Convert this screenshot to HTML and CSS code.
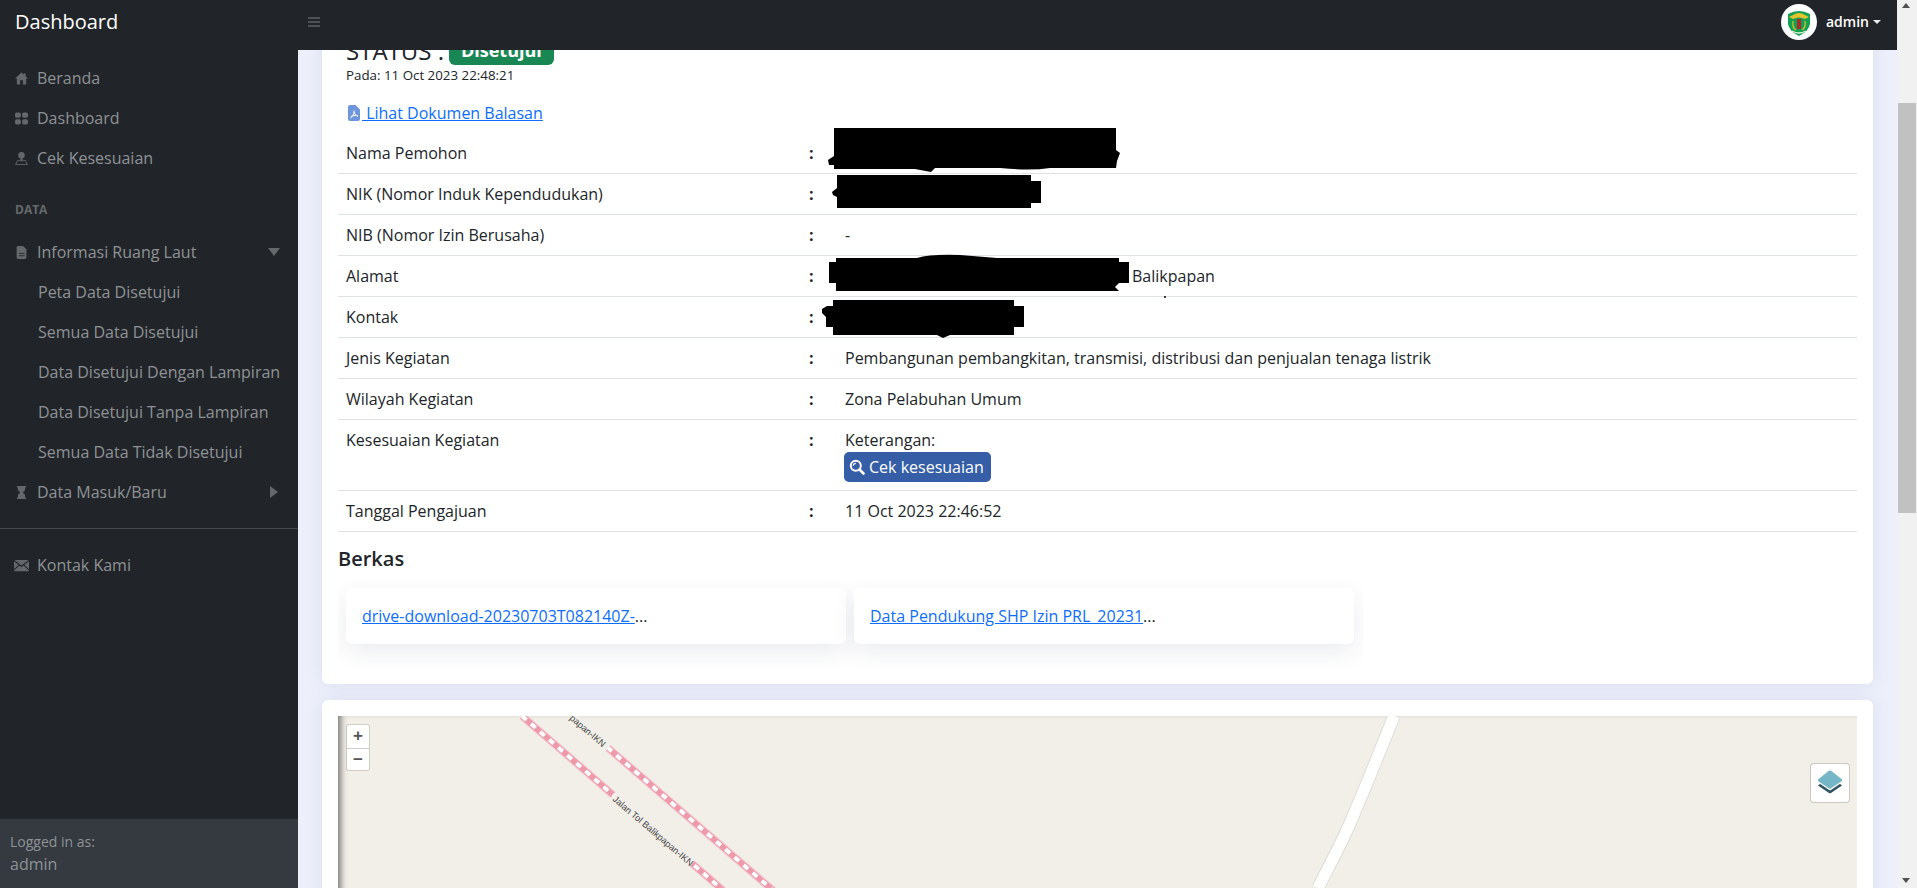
FILE: index.html
```html
<!DOCTYPE html>
<html lang="en">
<head>
<meta charset="UTF-8">
<meta name="viewport" content="width=device-width, initial-scale=1.0">
<title>Dashboard</title>
<link rel="stylesheet" href="styles.css">
</head>
<body>

<div class="app">
    <nav class="topnav">
        <a class="brand">Dashboard</a>
        <svg class="toggle" viewBox="0 0 12 10" width="12" height="10"><path d="M0 1h12M0 5h12M0 9h12" stroke="#7d8083" stroke-width="1.2"/></svg>
        <div class="user">
            <span class="avatar">
                <svg viewBox="0 0 36 36" width="36" height="36">
                    <circle cx="18" cy="18" r="18" fill="#fff"/>
                    <path d="M7 10 Q18 4 29 10 V20 Q28 27 18 32 Q8 27 7 20Z" fill="#12a150"/>
                    <path d="M8 13 L12 11 Q18 7 24 11 L28 13 L24 15 Q18 12 12 15Z" fill="#e3c22e"/>
                    <rect x="16" y="15" width="4" height="10" fill="#b3262b"/>
                    <path d="M12 17 Q11 24 15 26M24 17 Q25 24 21 26" stroke="#e3c22e" stroke-width="1.200" fill="none"/>
                    <path d="M11 27 Q18 31 25 27" stroke="#e8f3d8" stroke-width="1.400" fill="none"/>
                </svg>
            </span>
            <span class="user-name">admin</span>
            <span class="caret"></span>
        </div>
    </nav>

    <div class="below">
        <aside class="sidebar">
            <div class="menu">
                <a class="item">
                    <svg class="ico" viewBox="1 1.500 14 13"><path d="M8 1.500 1 8h2v6.500h3.500V10h3v4.500H13V8h2L12.500 5.600V2.500h-2v1.200z"/></svg>
                    Beranda
                </a>
                <a class="item">
                    <svg class="ico" viewBox="1.500 2 13.300 12.300"><rect x="1.500" y="2" width="6" height="5.500" rx="1.800"/><rect x="8.800" y="2" width="6" height="5.500" rx="1.800"/><rect x="1.500" y="8.800" width="6" height="5.500" rx="1.800"/><rect x="8.800" y="8.800" width="6" height="5.500" rx="1.800"/></svg>
                    Dashboard
                </a>
                <a class="item">
                    <svg class="ico" viewBox="1 1 14 14.500"><circle cx="8" cy="4.600" r="3.600"/><path d="M6.700 8h2.600v3.400H6.700z"/><path d="M3.600 10.400h2.600M9.800 10.400h2.600M3.600 10.400 1.400 15h13.200l-2.200-4.600" fill="none" stroke="currentColor" stroke-width="1"/></svg>
                    Cek Kesesuaian
                </a>
                <div class="menu-head">DATA</div>
                <a class="item">
                    <svg class="ico" viewBox="1.500 1 12.500 14"><path d="M4 1h5.500L13 4.500V13.500a1.500 1.500 0 0 1-1.500 1.500h-7.500A1.500 1.500 0 0 1 2.500 13.500V2.500A1.500 1.500 0 0 1 4 1z"/><path d="M5 9h6M5 11.500h6" stroke="#212529" stroke-width=".9"/></svg>
                    Informasi Ruang Laut
                    <span class="arrow-down"></span>
                </a>
                <a class="item sub">Peta Data Disetujui</a>
                <a class="item sub">Semua Data Disetujui</a>
                <a class="item sub">Data Disetujui Dengan Lampiran</a>
                <a class="item sub">Data Disetujui Tanpa Lampiran</a>
                <a class="item sub">Semua Data Tidak Disetujui</a>
                <a class="item">
                    <svg class="ico" viewBox="2 1 12 14"><path d="M3 1h10v1.400h-1V4c0 2-1.600 3-2.600 4 1 1 2.600 2 2.600 4v1.600h1V15H3v-1.400h1V12c0-2 1.600-3 2.600-4C5.600 7 4 6 4 4V2.400H3z"/></svg>
                    Data Masuk/Baru
                    <span class="arrow-right"></span>
                </a>
                <hr class="menu-line">
                <a class="item">
                    <svg class="ico ico-wide" viewBox="0 0 16 12"><path d="M1 0h14a1 1 0 0 1 .6.200L8 6 .4.200A1 1 0 0 1 1 0z"/><path d="M0 1.400 5 5.200 0 10zM16 1.400 11 5.200l5 4.800zM5.800 5.900 8 7.500l2.200-1.600L16 11.400a1 1 0 0 1-1 .6H1a1 1 0 0 1-1-.6z"/></svg>
                    Kontak Kami
                </a>
            </div>
            <div class="side-foot">
                <div class="foot-small">Logged in as:</div>
                <div>admin</div>
            </div>
        </aside>

        <main class="main">
            <div class="scroller">
                <section class="card card-detail">
                    <div class="status-line">
                        <span class="status-title">STATUS :</span>
                        <span class="badge">Disetujui</span>
                    </div>
                    <div class="status-date">Pada: 11 Oct 2023 22:48:21</div>

                    <a class="doc-link">
                        <svg class="pdf" viewBox="0 0 16 16" width="16" height="16"><path d="M4 0h5.500L14 4.500V14a2 2 0 0 1-2 2H4a2 2 0 0 1-2-2V2a2 2 0 0 1 2-2z" fill="#6f96dc"/><path d="M8 5.500c.6 3-1.500 6-3.500 7.500M8 7c1 2.500 2.500 4 4 4.500M4.800 11.500c2-1 4.500-1.300 6.700-1" stroke="#fff" stroke-width="1" fill="none"/></svg>
                        Lihat Dokumen Balasan
                    </a>

                    <table class="info">
                        <colgroup><col class="c-label"><col class="c-colon"><col></colgroup>
                        <tr><td>Nama Pemohon</td><td class="colon">:</td><td></td></tr>
                        <tr><td>NIK (Nomor Induk Kependudukan)</td><td class="colon">:</td><td></td></tr>
                        <tr><td>NIB (Nomor Izin Berusaha)</td><td class="colon">:</td><td>-</td></tr>
                        <tr><td>Alamat</td><td class="colon">:</td><td class="addr">Balikpapan</td></tr>
                        <tr><td>Kontak</td><td class="colon">:</td><td></td></tr>
                        <tr><td>Jenis Kegiatan</td><td class="colon">:</td><td>Pembangunan pembangkitan, transmisi, distribusi dan penjualan tenaga listrik</td></tr>
                        <tr><td>Wilayah Kegiatan</td><td class="colon">:</td><td>Zona Pelabuhan Umum</td></tr>
                        <tr>
                            <td>Kesesuaian Kegiatan</td><td class="colon">:</td>
                            <td>
                                <div class="note">Keterangan:</div>
                                <a class="btn-check">
                                    <svg viewBox="0 0 16 16" width="16" height="16"><circle cx="6.800" cy="6.800" r="5" fill="none" stroke="#fff" stroke-width="2"/><path d="M10.500 10.500 14.500 14.500" stroke="#fff" stroke-width="2.600" stroke-linecap="round"/><path d="M4.300 6.800a2.500 2.500 0 0 1 2.500-2.500" stroke="#fff" stroke-width="1.200" fill="none"/></svg>
                                    Cek kesesuaian
                                </a>
                            </td>
                        </tr>
                        <tr><td>Tanggal Pengajuan</td><td class="colon">:</td><td>11 Oct 2023 22:46:52</td></tr>
                    </table>

                    <h5 class="files-title">Berkas</h5>
                    <div class="files">
                        <div class="file"><a>drive-download-20230703T082140Z-</a>...</div>
                        <div class="file"><a>Data Pendukung SHP Izin PRL_20231</a>...</div>
                    </div>
                </section>

                <section class="card card-map">
                    <div class="map">
                        <svg class="map-lines" viewBox="0 0 1519 190" width="1519" height="190">
                            <g fill="none">
                                <path d="M184 0 395 183" stroke="#f4ccd3" stroke-width="8"/>
                                <path d="M184 0 395 183" stroke="#ee9aaa" stroke-width="6"/>
                                <path d="M184 0 395 183" stroke="#fff" stroke-width="4" stroke-dasharray="6 6"/>
                                <path d="M233 0 445 183" stroke="#f4ccd3" stroke-width="8"/>
                                <path d="M233 0 445 183" stroke="#ee9aaa" stroke-width="6"/>
                                <path d="M233 0 445 183" stroke="#fff" stroke-width="4" stroke-dasharray="6 6"/>
                                <path d="M1056 0C1040 40 1025 78 1009 114 1000 134 990 152 980 172" stroke="#d9d6d0" stroke-width="13"/>
                                <path d="M1056 0C1040 40 1025 78 1009 114 1000 134 990 152 980 172" stroke="#fff" stroke-width="11.500"/>
                            </g>
                            <g class="road-label">
                                <path d="M275 79 354 148" stroke="#f2efe9" stroke-width="9"/>
                                <text transform="translate(274 84) rotate(40.500)">Jalan Tol Balikpapan-IKN</text>
                                <path d="M233 0 270 32" stroke="#f2efe9" stroke-width="9"/>
                                <text transform="translate(231 3) rotate(40.500)">papan-IKN</text>
                            </g>
                        </svg>
                        <div class="zoom-ctl">
                            <a class="zoom-btn">+</a>
                            <a class="zoom-btn">&minus;</a>
                        </div>
                        <div class="layers-ctl">
                            <svg viewBox="0 0 26 26" width="26" height="26">
                                <path d="M13 6 25 15.500 14 23a2 2 0 0 1-2 0L1 15.500z" fill="#2e5560"/>
                                <path d="M13 4 25 12.500 14 20a2 2 0 0 1-2 0L1 12.500z" fill="#f4f5f3"/>
                                <path d="M11.500 1 1 9.500a1.400 1.400 0 0 0 0 1.500l10.500 7a2.400 2.400 0 0 0 2.800 0L25 11a1.400 1.400 0 0 0 0-1.500L14.500 1a2.400 2.400 0 0 0-3 0z" fill="#74b6c5"/>
                            </svg>
                        </div>
                    </div>
                </section>
            </div>
        </main>
    </div>

    <svg class="redact" viewBox="0 0 1917 888" width="1917" height="888">
        <path d="M834 128H1116V150L1120 153 1117 161 1116 168H1050Q1030 171 1000 168H935L931 172 915 169H834V165H829L828 160 834 156z"/>
        <path d="M837 175H1031V181H1041V203H1031V208H837V197L833 195 832 192 837 188z"/>
        <path d="M836 258H917Q930 254 960 255L997 258H1119V262H1129V283H1119L1115 287 1119 291H836V283H829V262H836z"/>
        <path d="M833 300H1014V306H1024V327H1014V335H950L943 338 937 335H833V327H826V317L822 313 822 309 827 306H833z"/>
        <circle cx="1165" cy="297" r="1"/>
    </svg>
</div>

<div class="fake-scrollbar">
    <span class="sb-up"></span>
    <div class="sb-track"><div class="sb-thumb"></div></div>
    <span class="sb-down"></span>
</div>

</body>
</html>
```

FILE: styles.css
```css
* {
    box-sizing: border-box;
}
html, body {
    height: 100%;
}
body {
    margin: 0;
    display: flex;
    overflow: hidden;
    font-family: 'Open Sans', sans-serif;
    font-size: 16px;
    line-height: 24px;
    color: #212529;
}
a {
    text-decoration: none;
}
.app {
    flex: 1;
    min-width: 0;
    height: 888px;
    display: flex;
    flex-direction: column;
    position: relative;
}

/* top bar */
.topnav {
    height: 50px;
    flex: none;
    background: #212529;
    display: flex;
    align-items: center;
    padding: 0 0 6px 15px;
}
.brand {
    width: 293px;
    font-size: 20px;
    color: #fff;
}
.toggle {
    flex: none;
}
.user {
    margin-left: auto;
    display: flex;
    align-items: center;
    padding-right: 16px;
}
.avatar {
    display: flex;
    width: 36px;
    height: 36px;
}
.user-name {
    margin-left: 9px;
    font-size: 14px;
    font-weight: 600;
    color: #fff;
}
.caret {
    margin-left: 4px;
    border-top: 4px solid #e9ecef;
    border-left: 4px solid transparent;
    border-right: 4px solid transparent;
}

.below {
    flex: 1;
    min-height: 0;
    display: flex;
}

/* sidebar */
.sidebar {
    width: 298px;
    flex: none;
    background: #212529;
    display: flex;
    flex-direction: column;
}
.menu {
    flex: 1;
    padding-top: 8px;
}
.item {
    height: 40px;
    display: flex;
    align-items: center;
    padding-left: 15px;
    color: #8f9295;
    font-size: 16px;
}
.item.sub {
    padding-left: 38px;
}
.ico {
    width: 13px;
    height: 13px;
    margin-right: 9px;
    fill: #65686b;
    color: #65686b;
    flex: none;
}
.ico-wide {
    width: 15px;
    margin-left: -1px;
    margin-right: 8px;
}
.menu-head {
    padding: 22px 15px 0;
    height: 54px;
    font-size: 12px;
    line-height: 20px;
    font-weight: 700;
    color: #65686b;
}
.arrow-down {
    margin-left: auto;
    margin-right: 18px;
    border-top: 8px solid #65686b;
    border-left: 6.500px solid transparent;
    border-right: 6.500px solid transparent;
}
.arrow-right {
    margin-left: auto;
    margin-right: 20px;
    border-left: 8px solid #65686b;
    border-top: 6.500px solid transparent;
    border-bottom: 6.500px solid transparent;
}
.menu-line {
    margin: 16px 0 16px;
    border: 0;
    border-top: 1px solid #45494d;
}
.side-foot {
    height: 69px;
    flex: none;
    background: #343a40;
    padding: 11px 10px 0;
    color: #8f9295;
    line-height: 23px;
}
.foot-small {
    font-size: 14px;
}

/* main column */
.main {
    flex: 1;
    min-width: 0;
    background: #edf0fb;
    padding: 0 24px;
    overflow: hidden;
}
.scroller {
    margin-top: -30px;
}
.card {
    background: #fff;
    border-radius: 6px;
    box-shadow: 0 0 16px rgba(120, 135, 180, .18);
    padding: 16px;
    margin-bottom: 16px;
}
.card-detail {
    height: 664px;
}
.status-line {
    display: flex;
    align-items: center;
    height: 29px;
    padding-left: 8px;
}
.status-title {
    font-size: 24px;
    font-weight: 500;
    margin-right: 5px;
}
.badge {
    background: #198754;
    color: #fff;
    font-weight: 700;
    font-size: 18px;
    padding: 2px 12px;
    border-radius: 6px;
    line-height: 25px;
}
.status-date {
    padding-left: 8px;
    font-size: 13.330px;
    line-height: 18px;
    margin-top: 1px;
}
.doc-link {
    display: block;
    width: max-content;
    margin: 17px 0 8px 8px;
    color: #0d6efd;
    text-decoration: underline;
}
.pdf {
    vertical-align: -2px;
}

/* detail table */
.info {
    width: 100%;
    border-collapse: collapse;
}
.c-label {
    width: 463px;
}
.c-colon {
    width: 36px;
}
.info td {
    padding: 8px;
    border-bottom: 1px solid #dee2e6;
    vertical-align: top;
}
.info .colon {
    font-weight: 700;
}
.info .addr {
    padding-left: 295px;
}
.note {
    line-height: 24px;
}
.btn-check {
    display: flex;
    width: 147px;
    margin-left: -1px;
    align-items: center;
    gap: 4px;
    height: 30px;
    padding: 0 7px 0 5px;
    background: #355ea6;
    color: #fff;
    border-radius: 5px;
}

/* attached files */
.files-title {
    margin: 14px 0 8px;
    font-size: 20px;
    font-weight: 600;
    line-height: 26px;
}
.files {
    display: flex;
    gap: 8px;
    width: 1025px;
    padding: 8px 8px 32px;
    overflow: hidden;
}
.file {
    width: 500px;
    height: 56px;
    flex: none;
    padding: 16px;
    background: #fff;
    border-radius: 6px;
    box-shadow: 0 8px 24px rgba(30, 40, 80, .09);
}
.file a {
    color: #0d6efd;
    text-decoration: underline;
}

/* map */
.card-map {
    height: 320px;
    margin-bottom: 0;
}
.map {
    position: relative;
    height: 190px;
    background: #f2efe9;
    overflow: hidden;
    box-shadow: inset 7px 0 6px -4px rgba(60, 60, 60, .65);
}
.map-lines {
    display: block;
    overflow: hidden;
}
.road-label text {
    font-family: 'Liberation Sans', sans-serif;
    font-size: 9.200px;
    fill: #3f3f3f;
}
.road-label path {
    fill: none;
}
.zoom-ctl {
    position: absolute;
    left: 9px;
    top: 9px;
    width: 22px;
    background: #fff;
    border-radius: 2px;
    box-shadow: 0 0 0 1px rgba(0, 0, 0, .14);
}
.zoom-btn {
    display: block;
    height: 22.500px;
    line-height: 22px;
    text-align: center;
    font-family: 'Liberation Sans', sans-serif;
    font-size: 17px;
    font-weight: 700;
    color: #555;
}
.zoom-btn + .zoom-btn {
    border-top: 1px solid #ccc;
}
.layers-ctl {
    position: absolute;
    right: 8px;
    top: 48px;
    width: 38px;
    height: 38px;
    display: flex;
    align-items: center;
    justify-content: center;
    background: #fff;
    border-radius: 3px;
    box-shadow: 0 0 0 1px rgba(0, 0, 0, .16);
}

/* blacked out values on the screenshot */
.redact {
    position: absolute;
    left: 0;
    top: 0;
    fill: #000;
    pointer-events: none;
}

.fake-scrollbar {
    width: 20px;
    flex: none;
    height: 888px;
    background: #f1f1f1;
    display: flex;
    flex-direction: column;
    align-items: center;
    padding: 0 1px;
}
.sb-up, .sb-down {
    flex: none;
    height: 17px;
    width: 18px;
    position: relative;
}
.sb-up::after, .sb-down::after {
    content: "";
    position: absolute;
    left: 4px;
    border-left: 4.500px solid transparent;
    border-right: 4.500px solid transparent;
}
.sb-up::after {
    top: 3px;
    border-bottom: 5px solid #505050;
}
.sb-down::after {
    top: 7px;
    border-top: 5px solid #505050;
}
.sb-track {
    flex: 1;
    width: 18px;
    padding-top: 86px;
}
.sb-thumb {
    height: 410px;
    background: #c1c1c1;
}
```
